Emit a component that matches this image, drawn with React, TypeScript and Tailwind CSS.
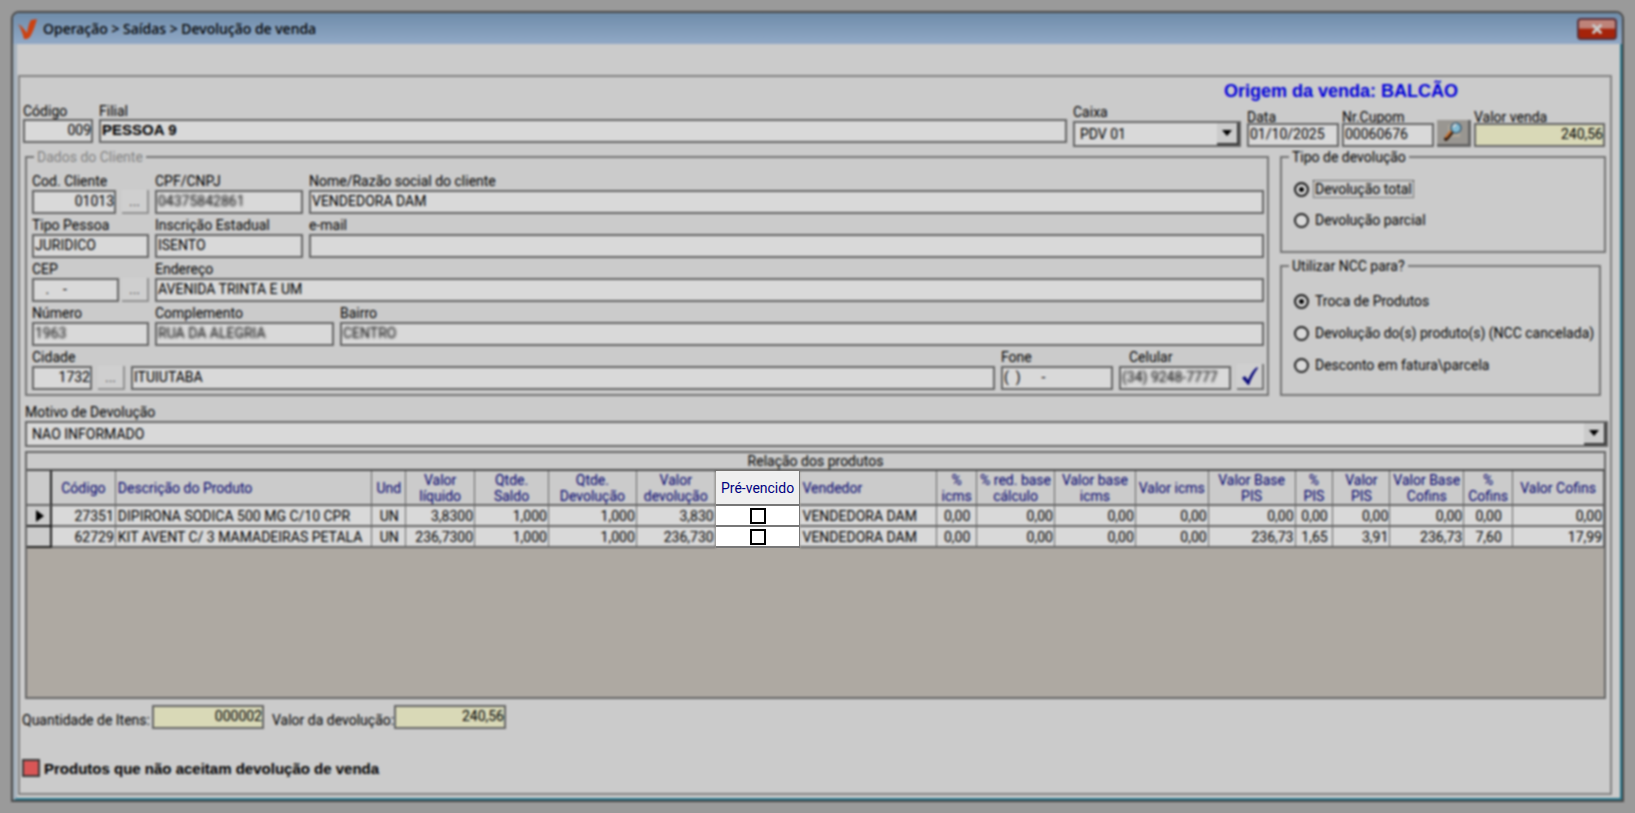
import type { ReactNode } from "react"
import clsx from "clsx"
import { X } from "lucide-react"

type FieldProps = {
  id: string
  label: string
  value?: string
  className?: string
  labelClass?: string
  inputClass?: string
  boxClass?: string
  masked?: boolean
}

function Field({ id, label, value = "", className, labelClass = "leading-[18px]", inputClass, boxClass = "bg-white", masked }: FieldProps) {
  return (
    <div className={clsx("flex min-w-0 flex-col", className)}>
      <label htmlFor={id} className={clsx("whitespace-nowrap", labelClass)}>{label}</label>
      <div className={clsx("flex h-6 border-2 border-[#777]", boxClass)}>
        <input
          id={id}
          defaultValue={value}
          className={clsx("w-full min-w-0 bg-transparent pb-[2px] pl-px outline-none", masked && "blur-[1px]", inputClass)}
        />
      </div>
    </div>
  )
}

function LookupButton({ label }: { label: string }) {
  return (
    <button
      type="button"
      aria-label={label}
      className="h-6 w-[27px] shrink-0 self-end border-r-2 border-b-2 border-[#aaa] bg-[#f4f4f4] leading-5 text-[#555]"
    >
      ...
    </button>
  )
}

function DropDown({ id, value }: { id: string; value: string }) {
  return (
    <div className="relative flex h-[26px] border-2 border-[#777] bg-white">
      <select id={id} defaultValue={value} className="w-full appearance-none bg-transparent px-[5px] leading-5 outline-none">
        <option>{value}</option>
      </select>
      <span className="pointer-events-none absolute inset-y-0 right-0 flex w-[22px] items-center justify-center border-r-2 border-b-2 border-[#444] bg-[#efefef]">
        <svg viewBox="0 0 10 6" className="h-[6px] w-[10px]">
          <path d="M0 0h10L5 6z" fill="#000" />
        </svg>
      </span>
    </div>
  )
}

function Group({ title, className, titleClass, children }: { title: string; className?: string; titleClass?: string; children: ReactNode }) {
  return (
    <fieldset className={clsx("min-w-0 border-2 border-[#888]", className)}>
      <legend className={clsx("ml-[7px] px-[3px] leading-4", titleClass)}>{title}</legend>
      {children}
    </fieldset>
  )
}

function Radio({ name, label, checked, focused }: { name: string; label: string; checked?: boolean; focused?: boolean }) {
  return (
    <label className="flex h-4 items-center gap-[5px] whitespace-nowrap">
      <input
        type="radio"
        name={name}
        defaultChecked={checked}
        className="size-[15px] shrink-0 appearance-none rounded-full border-2 border-[#222] bg-white checked:bg-black checked:shadow-[inset_0_0_0_3px_white]"
      />
      <span className={clsx("px-px leading-4", focused && "outline outline-dotted outline-[#222]")}>{label}</span>
    </label>
  )
}

const columns = [
  { title: "", width: 25, align: "text-center" },
  { title: "Código", width: 64, align: "text-right" },
  { title: "Descrição do Produto", width: 257, align: "text-left" },
  { title: "Und", width: 34, align: "text-center" },
  { title: "Valor\nlíquido", width: 69, align: "text-right" },
  { title: "Qtde.\nSaldo", width: 74, align: "text-right" },
  { title: "Qtde.\nDevolução", width: 88, align: "text-right" },
  { title: "Valor\ndevolução", width: 79, align: "text-right" },
  { title: "Pré-vencido", width: 85, align: "text-center" },
  { title: "Vendedor", width: 137, align: "text-left" },
  { title: "%\nicms", width: 40, align: "text-center" },
  { title: "% red. base\ncálculo", width: 78, align: "text-right" },
  { title: "Valor base\nicms", width: 81, align: "text-right" },
  { title: "Valor icms", width: 73, align: "text-right" },
  { title: "Valor Base\nPIS", width: 87, align: "text-right" },
  { title: "%\nPIS", width: 38, align: "text-center" },
  { title: "Valor\nPIS", width: 57, align: "text-right" },
  { title: "Valor Base\nCofins", width: 74, align: "text-right" },
  { title: "%\nCofins", width: 49, align: "text-center" },
  { title: "Valor Cofins", width: 91, align: "text-right" },
]

const HIGHLIGHT = 8

const rows = [
  ["27351", "DIPIRONA SODICA 500 MG C/10 CPR", "UN", "3,8300", "1,000", "1,000", "3,830", "", "VENDEDORA DAM", "0,00", "0,00", "0,00", "0,00", "0,00", "0,00", "0,00", "0,00", "0,00", "0,00"],
  ["62729", "KIT AVENT C/ 3 MAMADEIRAS PETALA", "UN", "236,7300", "1,000", "1,000", "236,730", "", "VENDEDORA DAM", "0,00", "0,00", "0,00", "0,00", "236,73", "1,65", "3,91", "236,73", "7,60", "17,99"],
]

function ProductTable() {
  return (
    <table className="w-full table-fixed border-separate border-spacing-0">
      <caption className="h-[18px] border-b-2 border-[#555] bg-[#efefef] leading-4">Relação dos produtos</caption>
      <colgroup>
        {columns.map((c, i) => <col key={i} style={{ width: `${(c.width / 1580) * 100}%` }} />)}
      </colgroup>
      <thead>
        <tr className="h-[35px]">
          {columns.map((c, i) => (
            <th
              key={i}
              className={clsx(
                "border-r border-b-2 border-[#777] bg-[#efefef] p-0 font-normal leading-4 whitespace-pre text-[#000080]",
                c.align === "text-left" ? "pl-[2px] text-left" : "text-center",
                i === 0 && "border-r-2 border-r-[#222]",
                i === HIGHLIGHT && "relative z-20",
              )}
            >
              {c.title}
            </th>
          ))}
        </tr>
      </thead>
      <tbody>
        {rows.map((row, r) => (
          <tr key={r} className="h-[21px]">
            <td className="border-r-2 border-b-2 border-[#222] bg-[#efefef] p-0">
              {r === 0 && (
                <svg viewBox="0 0 8 12" className="ml-[9px] h-3 w-2">
                  <path d="M0 0l8 6-8 6z" fill="#000" />
                </svg>
              )}
            </td>
            {row.map((cell, i) => (
              <td
                key={i}
                className={clsx(
                  "overflow-hidden border-r border-b-2 border-[#777] bg-white py-0 pr-px pl-[2px] leading-4 whitespace-nowrap",
                  columns[i + 1].align,
                  i + 1 === HIGHLIGHT && "relative z-20",
                )}
              >
                {i + 1 === HIGHLIGHT ? (
                  <input
                    type="checkbox"
                    aria-label={`Pré-vencido ${row[0]}`}
                    className="mx-auto block size-4 appearance-none border-2 border-black bg-white"
                  />
                ) : cell}
              </td>
            ))}
          </tr>
        ))}
      </tbody>
    </table>
  )
}

export default function App() {
  return (
    <div className="relative flex min-h-screen bg-[#b5b5b5] p-[11px] font-['Roboto',sans-serif] text-sm text-black">
      <div className="flex min-w-0 flex-1 flex-col overflow-hidden rounded-t-lg border-2 border-[#555]">
        {/* barra de título */}
        <header className="flex h-[31px] items-center bg-linear-to-b from-[#83a5c8] to-[#abc7e9] px-[5px]">
          <svg viewBox="0 0 20 20" className="h-5 w-5">
            <path d="M0 5l4 2 3 6-1 5z" fill="#c9735a" />
            <path d="M3 8l3 2 3 4C10 8 11 4 13 1l6-1c-2 7-4 13-7 18l-3 2H6z" fill="#f04e16" />
          </svg>
          <h1 className="ml-[5px] flex-1 pt-px font-['Noto_Sans',sans-serif] text-sm font-medium">
            Operação &gt; Saídas &gt; Devolução de venda
          </h1>
          <button
            type="button"
            aria-label="Fechar"
            className="flex h-[22px] w-10 items-center justify-center rounded-sm border-2 border-[#6b3a44] bg-linear-to-b from-[#e09a8f] from-45% to-[#c22a0c] to-50%"
          >
            <X className="size-[14px] text-[#eee]" strokeWidth={5} />
          </button>
        </header>

        <div className="flex flex-1 flex-col border-r-2 border-b-2 border-l-4 border-r-[#2f8ea8] border-b-[#2f8ea8] border-l-[#c3d1df] bg-[#efefef] pt-[31px] pr-2 pb-[3px] pl-px">
          <main className="flex flex-1 flex-col border-2 border-[#999]">
            <div className="flex h-[26px] items-end justify-end pr-[152px] font-['Liberation_Sans',sans-serif] text-lg leading-6 font-bold text-[#0000ff]">
              Origem da venda: BALCÃO
            </div>

            <div className="flex items-end gap-[6px] pr-[5px] pl-[3px]">
              <div className="flex min-w-0 flex-1 gap-[6px] self-start">
                <Field id="codigo" label="Código" value="009" className="w-[70px]" labelClass="leading-4" inputClass="text-right" />
                <Field id="filial" label="Filial" value="PESSOA 9" className="flex-1" labelClass="leading-4" inputClass="font-['Liberation_Sans',sans-serif] text-[15px] font-bold" />
              </div>
              <div className="flex w-[168px] flex-col">
                <label htmlFor="caixa" className="leading-[18px]">Caixa</label>
                <DropDown id="caixa" value="PDV 01" />
              </div>
              <div className="flex items-end gap-[3px]">
                <Field id="data" label="Data" value="01/10/2025" className="w-[92px]" labelClass="leading-3" />
                <Field id="cupom" label="Nr.Cupom" value="00060676" className="w-[92px]" labelClass="leading-3" />
                <button type="button" aria-label="Pesquisar cupom" className="flex h-[27px] w-[34px] items-center justify-center border-r-[3px] border-b-[3px] border-[#777] bg-[#b4b1ab]">
                  <svg viewBox="0 0 20 20" className="size-5">
                    <path d="M5 3h12v12H5z" fill="#cfc4b4" />
                    <path d="M3 17l6-7" stroke="#3a2010" strokeWidth="4" strokeLinecap="round" />
                    <path d="M3 15l5-6" stroke="#f08a3c" strokeWidth="2" strokeLinecap="round" />
                    <circle cx="13" cy="6" r="5" fill="#9adcf8" stroke="#49708c" strokeWidth="1.5" />
                    <path d="M10 5l3-3" stroke="#fff" strokeWidth="2" />
                  </svg>
                </button>
                <Field id="valor-venda" label="Valor venda" value="240,56" className="w-[131px]" labelClass="leading-3" boxClass="bg-[#ffffd8]" inputClass="text-right" />
              </div>
            </div>

            <div className="mt-[2px] flex items-stretch gap-[11px] pr-1 pl-[5px]">
              <Group title="Dados do Cliente" titleClass="text-[#999]" className="flex-1">
                <div className="flex flex-col gap-[2px] pt-[7px] pr-[3px] pb-1 pl-[5px]">
                  <div className="flex gap-[6px]">
                    <div className="flex w-[117px] justify-between">
                      <Field id="cliente" label="Cod. Cliente" value="01013" className="w-[84px]" inputClass="text-right" />
                      <LookupButton label="Buscar cliente" />
                    </div>
                    <Field id="cpf" label="CPF/CNPJ" value="04375842861" className="w-[148px]" masked />
                    <Field id="nome" label="Nome/Razão social do cliente" value="VENDEDORA DAM" className="flex-1" />
                  </div>
                  <div className="flex gap-[6px]">
                    <Field id="tipo" label="Tipo Pessoa" value="JURIDICO" className="w-[117px]" />
                    <Field id="inscricao" label="Inscrição Estadual" value="ISENTO" className="w-[148px]" />
                    <Field id="email" label="e-mail" className="flex-1" />
                  </div>
                  <div className="flex gap-[6px]">
                    <div className="flex w-[117px] justify-between">
                      <Field id="cep" label="CEP" value="   .    -" className="w-[87px]" inputClass="whitespace-pre" />
                      <LookupButton label="Buscar CEP" />
                    </div>
                    <Field id="endereco" label="Endereço" value="AVENIDA TRINTA E UM" className="flex-1" />
                  </div>
                  <div className="flex gap-[6px]">
                    <Field id="numero" label="Número" value="1963" className="w-[117px]" masked />
                    <Field id="complemento" label="Complemento" value="RUA DA ALEGRIA" className="w-[179px]" masked />
                    <Field id="bairro" label="Bairro" value="CENTRO" className="flex-1" masked />
                  </div>
                  <div className="flex gap-[6px]">
                    <Field id="cidade" label="Cidade" value="1732" className="w-[60px]" inputClass="text-right" />
                    <LookupButton label="Buscar cidade" />
                    <div className="flex flex-1 items-end">
                      <div className="flex h-6 w-full border-2 border-[#777] bg-white">
                        <input aria-label="Nome da cidade" defaultValue="ITUIUTABA" className="w-full bg-transparent pb-[2px] pl-px outline-none" />
                      </div>
                    </div>
                    <Field id="fone" label="Fone" value="(  )      -" className="w-28" inputClass="whitespace-pre" />
                    <Field id="celular" label="Celular" value="(34) 9248-7777" className="w-28" labelClass="pl-[10px] leading-[18px]" masked />
                    <button type="button" aria-label="Confirmar" className="flex h-[26px] w-[27px] items-center justify-center self-end border-r-2 border-b-2 border-[#888] bg-[#f4f4f4]">
                      <svg viewBox="0 0 18 20" className="h-5 w-[18px]">
                        <path d="M1 12l3-2 3 4C9 9 12 4 16 1l1 1C13 7 10 13 8 19H7z" fill="#0a0a90" />
                      </svg>
                    </button>
                  </div>
                </div>
              </Group>

              <div className="flex w-[326px] flex-col gap-[5px]">
                <Group title="Tipo de devolução" className="h-[104px]">
                  <div className="flex flex-col gap-[15px] px-3 pt-4">
                    <Radio name="tipo-devolucao" label="Devolução total" checked focused />
                    <Radio name="tipo-devolucao" label="Devolução parcial" />
                  </div>
                </Group>
                <Group title="Utilizar NCC para?" className="mr-[5px] flex-1">
                  <div className="flex flex-col gap-4 px-3 pt-[19px]">
                    <Radio name="ncc" label="Troca de Produtos" checked />
                    <Radio name="ncc" label="Devolução do(s) produto(s) (NCC cancelada)" />
                    <Radio name="ncc" label="Desconto em fatura\parcela" />
                  </div>
                </Group>
              </div>
            </div>

            <div className="mt-[7px] flex flex-col pr-[2px] pl-[5px]">
              <label htmlFor="motivo" className="leading-[18px]">Motivo de Devolução</label>
              <DropDown id="motivo" value="NAO INFORMADO" />
            </div>

            <div className="mt-1 mr-1 ml-[5px] flex-1 border-2 border-[#777] bg-[#cdc7bf]">
              <ProductTable />
            </div>

            <div className="mt-[5px] flex items-center pl-[2px] whitespace-nowrap">
              <label htmlFor="itens" className="w-[130px] pt-[6px]">Quantidade de Itens:</label>
              <div className="flex h-6 w-28 border-2 border-[#777] bg-[#ffffd8]">
                <input id="itens" defaultValue="000002" className="w-full bg-transparent pb-[2px] text-right outline-none" />
              </div>
              <label htmlFor="devolucao" className="ml-2 w-[122px] pt-[6px]">Valor da devolução:</label>
              <div className="flex h-6 w-28 border-2 border-[#777] bg-[#ffffd8]">
                <input id="devolucao" defaultValue="240,56" className="w-full bg-transparent pb-[2px] text-right outline-none" />
              </div>
            </div>

            <div className="mt-7 mb-[14px] flex items-center gap-1 pl-[2px] font-['Liberation_Sans',sans-serif] text-[15px] font-bold">
              <span className="size-[18px] border-2 border-[#444] bg-[#ff6666]" />
              Produtos que não aceitam devolução de venda
            </div>
          </main>
        </div>
      </div>

      {/* véu que destaca a coluna Pré-vencido */}
      <div className="pointer-events-none absolute inset-0 z-10 bg-black/15 backdrop-blur-[1px]" />
    </div>
  )
}
